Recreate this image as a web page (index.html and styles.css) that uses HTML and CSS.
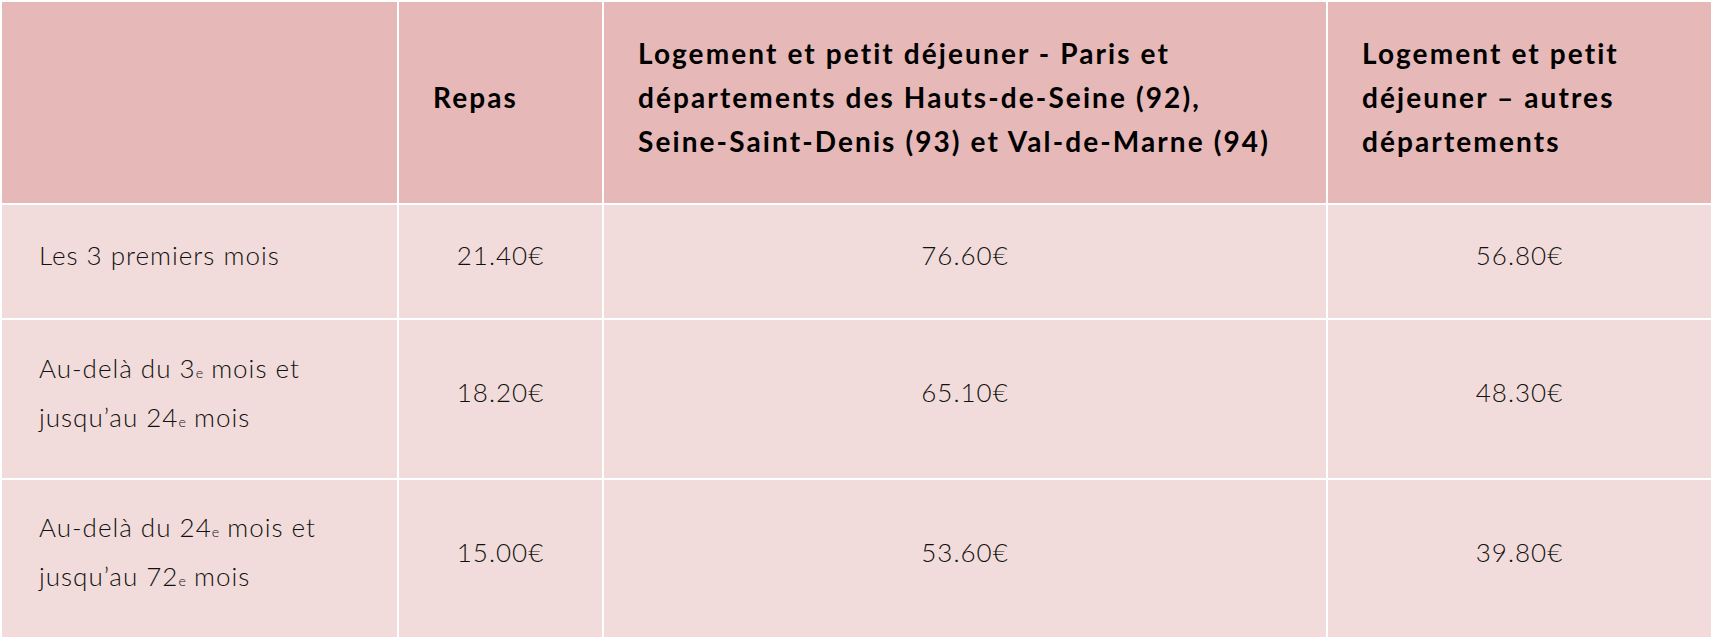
FILE: index.html
```html
<!DOCTYPE html>
<html lang="fr">
<head>
<meta charset="utf-8">
<title>Barème</title>
<link rel="stylesheet" href="styles.css">
</head>
<body>
<table class="rates">
  <colgroup>
    <col class="c1"><col class="c2"><col class="c3"><col class="c4">
  </colgroup>
  <thead>
    <tr class="head-row">
      <th></th>
      <th>Repas</th>
      <th>Logement et petit déjeuner - Paris et départements des <span class="nowrap">Hauts-de-Seine</span> (92), <span class="nowrap">Seine-Saint-Denis</span> (93) et <span class="nowrap">Val-de-Marne</span> (94)</th>
      <th>Logement et petit déjeuner – autres départements</th>
    </tr>
  </thead>
  <tbody>
    <tr class="r1">
      <td class="label">Les 3 premiers mois</td>
      <td class="num">21.40€</td>
      <td class="num">76.60€</td>
      <td class="num">56.80€</td>
    </tr>
    <tr class="r2">
      <td class="label">Au-delà du 3<span class="ord">e</span> mois et jusqu’au 24<span class="ord">e</span> mois</td>
      <td class="num">18.20€</td>
      <td class="num">65.10€</td>
      <td class="num">48.30€</td>
    </tr>
    <tr class="r3">
      <td class="label">Au-delà du 24<span class="ord">e</span> mois et jusqu’au 72<span class="ord">e</span> mois</td>
      <td class="num">15.00€</td>
      <td class="num">53.60€</td>
      <td class="num">39.80€</td>
    </tr>
  </tbody>
</table>
</body>
</html>
```
FILE: styles.css
```css
html, body {
  margin: 0;
  padding: 0;
  background: #ffffff;
}

.rates {
  border-collapse: separate;
  border-spacing: 2px;
  table-layout: fixed;
  width: 1713px;
  font-family: "Lato", "Liberation Sans", sans-serif;
  color: #000000;
}

.c1 { width: 395px; }
.c2 { width: 203px; }
.c3 { width: 722px; }
.c4 { width: 383px; }

.rates th {
  background: #e6b8b7;
  height: 201px;
  padding: 0 20px 12px 34px;
  text-align: left;
  vertical-align: middle;
  font-weight: 700;
  font-size: 28px;
  letter-spacing: 2.1px;
  line-height: 44px;
  box-sizing: border-box;
}

.nowrap {
  white-space: nowrap;
}

.rates td {
  background: #f2dcdb;
  padding: 0 24px 13px 37px;
  vertical-align: middle;
  font-weight: 300;
  font-size: 26px;
  letter-spacing: 1px;
  line-height: 49px;
  color: #111111;
  box-sizing: border-box;
}

.r1 td { height: 113px; }
.r2 td { height: 158px; }
.r3 td { height: 157px; }

.rates td.num {
  text-align: center;
  padding: 0 0 13px 0;
}

.ord {
  font-size: 0.55em;
  letter-spacing: 0;
  line-height: 1;
}
```
